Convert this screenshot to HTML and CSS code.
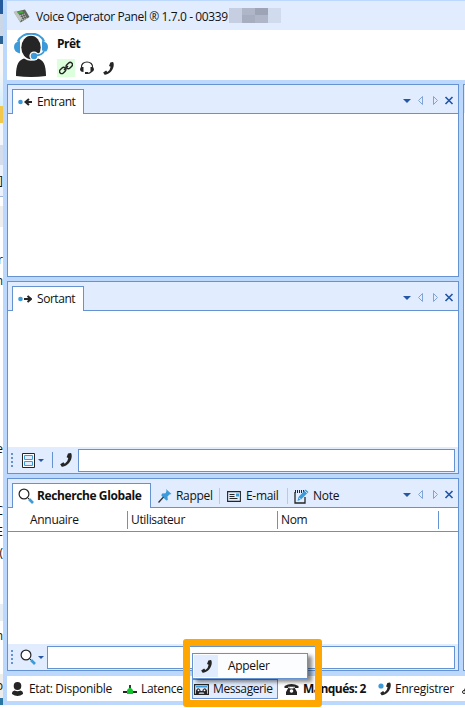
FILE: index.html
```html
<!DOCTYPE html>
<html lang="fr">
<head>
<meta charset="utf-8">
<title>Voice Operator Panel</title>
<link rel="stylesheet" href="styles.css">
</head>
<body>
<svg width="0" height="0" class="defs">
  <symbol id="phone" viewBox="0 0 12 14"><path d="M8 .4 10.6 0Q11.2 0 11.4.7C13 6 8.500 13 2.500 13.800Q1.800 14 1.400 13.300L.2 11.300 3.400 9.300 4.800 10.800Q8 8.500 8.300 5L6.600 4.300Z" fill="#252525"/></symbol>
  <symbol id="search" viewBox="0 0 16 16"><circle cx="6" cy="6" r="4.900" fill="#fff" stroke="#252525" stroke-width="1.200"/><path d="m9.500 9.500 2 2" stroke="#252525"/><path d="m11 11 4 4" stroke="#3d9ad8" stroke-width="2.600"/></symbol>
  <symbol id="controls" viewBox="0 0 52 9"><path d="M1 3h8L5 7z" fill="#2457a6"/><path d="M20.500.5v8l-4-4zM31.500.5v8l4-4z" fill="none" stroke="#80a4d6"/><path d="m43.500 1 7 7m0-7-7 7" stroke="#2457a6" stroke-width="1.700"/></symbol>
</svg>
<div class="desktop">
  <div class="behind">
    <i class="b1"></i><i class="b2"></i><i class="b3"></i><i class="b4"></i><i class="b5"></i><i class="b6"></i><i class="b7"></i><i class="b8"></i><i class="b9"></i><i class="b10"></i><i class="b11"></i>
    <div class="scraps"><span>]</span><span>er</span><span>n</span><span>e</span><span>C</span><span>E</span><span>(</span><span>n</span><span>b</span></div>
  </div>
  <div class="window">
    <header class="title">
      <svg class="desk" width="17" height="14" viewBox="0 0 17 14"><path d="m1 3 11-2.500 4.500 7.500-9 5.500z" fill="#60665f"/><path d="m.5 3 3-1.500 5.500 8.500-2 3z" fill="#bfc3bf"/><path d="m4 3 5-1.500 1.500 2-5 1.500z" fill="#45a83b"/><path d="m7 7 5-2m-4 4 5-2m-4 4 5-2" stroke="#d5d9d5" stroke-dasharray="1.200 .8"/></svg>
      <span class="t-title">Voice Operator Panel ® 1.7.0 - 00339</span>
      <span class="mask"><i></i><i></i><i></i><i></i><i></i><i></i><i></i><i></i></span>
    </header>
    <section class="agent">
      <svg class="avatar" width="34" height="44" viewBox="0 0 34 44"><path d="M2 43C2 31 5 27 10 25.500Q17 30 24 25.500C29 27 32 31 32 43Q17 45 2 43Z" fill="#252525"/><ellipse cx="17" cy="14.500" rx="9.700" ry="11.700" fill="#252525"/><path d="M4 8.500C8-2 26-2 30 8.500" fill="none" stroke="#3d9ad8" stroke-width="2.200"/><path d="M6 8v12.500Q0 19 0 14t6-6M28 8v12.500q6-1.500 6-6.500t-6-6" fill="#3d9ad8"/><path d="M30 18q-1 4-8 4.500" fill="none" stroke="#fff" stroke-width="4"/><circle cx="20" cy="23" r="4.600" fill="#fff"/><circle cx="20" cy="23" r="3.200" fill="#3d9ad8"/><path d="M30 18q-1 4-9 4.500" fill="none" stroke="#3d9ad8" stroke-width="1.800"/></svg>
      <div class="state">
        <b class="t-ready">Prêt</b>
        <div class="tools">
          <span class="link"><svg width="14" height="14" viewBox="0 0 14 14"><g fill="none" stroke="#252525" stroke-width="1.400"><rect x="6.800" y="2.300" width="7" height="4.400" rx="2.200" transform="rotate(-45 10.300 4.500)"/><rect x=".2" y="7.300" width="7" height="4.400" rx="2.200" transform="rotate(-45 3.700 9.500)"/><path d="m5 9 4-4"/></g></svg></span>
          <svg width="14" height="14" viewBox="0 0 14 14"><path d="M1.500 7C0-1 14-1 12.500 7M12 9q0 3-5 3.500" fill="none" stroke="#252525" stroke-width="1.200"/><path d="M1 6h2.500v5Q0 11 0 8zM13 6h-2.500v5Q14 11 14 8zM5 11h3v2H5z" fill="#252525"/></svg>
          <svg class="p" width="11" height="13"><use href="#phone"/></svg>
        </div>
      </div>
    </section>
    <div class="docks">
      <main class="left">
        <section class="panel">
          <div class="tabs"><div class="tab on"><svg width="14" height="8" viewBox="0 0 14 8"><circle cx="2.500" cy="4" r="2.300" fill="#3d9ad8"/><path d="M14 4H8m3-3L7.500 4 11 7" fill="none" stroke="#252525" stroke-width="2"/></svg><span class="t-in">Entrant</span></div><svg class="ctl" width="52" height="9"><use href="#controls"/></svg></div>
          <div class="body"></div>
        </section>
        <section class="panel">
          <div class="tabs"><div class="tab on"><svg width="14" height="8" viewBox="0 0 14 8"><circle cx="2.500" cy="4" r="2.300" fill="#3d9ad8"/><path d="M6 4h6M9.500 1 13 4 9.500 7" fill="none" stroke="#252525" stroke-width="2"/></svg><span class="t-out">Sortant</span></div><svg class="ctl" width="52" height="9"><use href="#controls"/></svg></div>
          <div class="body"></div>
          <div class="bar"><i class="grip"></i><svg class="cab" width="13" height="15" viewBox="0 0 13 15"><path d="M.5.500h12v14H.5z" fill="#fff" stroke="#252525"/><path d="M2.500 2.500h8v4h-8zm0 6h8v4h-8z" fill="#e1edff" stroke="#3d9ad8"/></svg><i class="caret"></i><i class="sep"></i><svg class="dial" width="12" height="14"><use href="#phone"/></svg><div class="input"></div></div>
        </section>
        <section class="panel">
          <div class="tabs">
            <div class="tab on wide"><svg width="16" height="16"><use href="#search"/></svg><b class="t-glob">Recherche Globale</b></div>
            <div class="tab r"><svg width="14" height="14" viewBox="0 0 14 14"><path d="m8 0 5.500 5-2 .5-2 2 .3 3.500-1.500.5-5-5L4 4.500l3.500-.2L8.500 2z" fill="#3d9ad8"/><path d="m5.500 8-5 5.500" stroke="#333" stroke-width="1.300"/></svg><span class="t-rap">Rappel</span></div>
            <div class="tab e"><svg width="14" height="11" viewBox="0 0 14 11"><path d="M.6.600h12.800v9.800H.6zM2.500 3.500h5m-5 2h5m-5 2h8" fill="none" stroke="#252525" stroke-width="1.100"/><path d="M9 2.500h3v3H9z" fill="#3d9ad8"/></svg><span class="t-mail">E-mail</span></div>
            <div class="tab n"><svg width="15" height="15" viewBox="0 0 15 15"><path d="M1 3v11h10V8" fill="none" stroke="#252525" stroke-width="1.300"/><path d="M1 2.500h11" stroke="#252525" stroke-width="3" stroke-dasharray="1 1"/><path d="m3.500 12 1-4 7-7.500 3 2.500-7.500 7.500z" fill="#3d9ad8"/><path d="m5 9 2 1.500M11 2l2 2" stroke="#fff" stroke-width=".7"/></svg><span class="t-note">Note</span></div>
            <svg class="ctl" width="52" height="9"><use href="#controls"/></svg>
          </div>
          <div class="cols"><span class="c1"><span class="t-ann">Annuaire</span></span><span class="c2"><span class="t-util">Utilisateur</span></span><span class="c3"><span class="t-nom">Nom</span></span></div>
          <div class="body"></div>
          <div class="bar"><i class="grip"></i><svg class="find" width="16" height="16"><use href="#search"/></svg><i class="caret"></i><div class="input low"></div></div>
        </section>
      </main>
      <aside class="next"><i></i></aside>
    </div>
    <footer class="status">
      <span class="s1"><svg width="11" height="14" viewBox="0 0 11 14"><ellipse cx="5.500" cy="4" rx="3.800" ry="4" fill="#252525"/><path d="M0 11q0-2 2.500-2.500 3 1.500 6 0Q11 9 11 11v1q-5.500 4-11 0z" fill="#252525"/></svg><span class="t-etat">Etat: Disponible</span></span>
      <span class="s2"><svg width="14" height="9" viewBox="0 0 14 9"><path d="M0 7h4m6 0h4M7 0v3" stroke="#252525" stroke-width="1.800"/><path d="M4 9V5l2-2h2l2 2v4z" fill="#14c42f"/></svg><span class="t-lat">Latence</span></span>
      <span class="s3"><svg width="15" height="11" viewBox="0 0 15 11"><path d="M.6.600h13.800v9.800H.6z" fill="#e1edff" stroke="#252525" stroke-width="1.200"/><path d="M2 2h11v1.500H2z" fill="#3d9ad8"/><path d="M2 10V6.500Q4 2.500 6.500 6v1h2V6Q11 2.500 13 6.500V10h-2.500L9.500 8.500h-4L4.500 10z" fill="#252525"/><circle cx="4.500" cy="6.300" r=".9" fill="#fff"/><circle cx="10.500" cy="6.300" r=".9" fill="#fff"/></svg><span class="t-mess">Messagerie</span></span>
      <span class="s4"><svg width="15" height="11" viewBox="0 0 14 11"><path d="M0 4V2q7-4 14 0v2h-3.500V2.800h-7V4zM4 3.500h1v1h4v-1h1L12.500 8v3h-11V8z" fill="#252525"/><circle cx="7" cy="7" r="1.800" fill="#fff"/></svg><b class="t-manq">Manqués: 2</b></span>
      <span class="s5"><svg width="13" height="14" viewBox="0 0 13 14"><circle cx="3" cy="4" r="2.600" fill="#3d9ad8"/><svg x="2" width="11" height="14"><use href="#phone"/></svg></svg><span class="t-enr">Enregistrer</span></span>
      <svg class="s6" width="4" height="9" viewBox="0 0 4 9"><circle cx="2" cy="7" r="1.500" fill="none" stroke="#252525"/><path d="m2 6 2-4" stroke="#252525"/></svg>
    </footer>
  </div>
  <div class="menu"><span class="mi"><svg width="11" height="13"><use href="#phone"/></svg></span><span class="t-app">Appeler</span></div>
  <div class="highlight"></div>
</div>
</body>
</html>
```
FILE: styles.css
```css
* { box-sizing: border-box; }
body { margin: 0; background: #fff; color: #111; font: 12px/16px "Open Sans", "Noto Sans", sans-serif; overflow: hidden; }
.defs { position: absolute; }
svg { display: block; flex: none; }
span, b { white-space: nowrap; }
.desktop { position: relative; width: 465px; height: 708px; display: flex; }
.behind { position: relative; overflow: hidden; width: 3px; height: 705px; display: flex; flex-direction: column; flex: none; }
.behind i { width: 3px; flex: none; }
.scraps { position: absolute; top: 173px; right: 0; display: grid; justify-items: end; grid-template-rows: 79px 21px 168px 62px 21px 21px 83px 50px 16px; }
.b1 { height: 14px; background: #245b9d; }
.b2 { height: 22px; background: #cbd7e7; }
.b3 { height: 8px; background: #2b6394; }
.b4 { height: 62px; background: linear-gradient(#f7f7f7 45%, #d4efff); }
.b5 { height: 17px; background: #f3c64c; }
.b6 { height: 22px; background: #f3f6fa; }
.b7 { height: 20px; background: #d5dcec; }
.b8 { height: 31px; background: #edf2fc; }
.b9 { height: 408px; background: linear-gradient(#9eb6d3 0 1px, #fff 1px 10px, #eee 10px 31px, #fff 31px); }
.b10 { height: 94px; background: linear-gradient(#e7edf4 0 17px, #fff 17px 70px, #ececec 70px); }
.b11 { height: 7px; background: #2876a3; }
.window { width: 462px; height: 705px; background: #bcd8fd; padding: 1px 0 4px 4px; display: flex; flex-direction: column; flex: none; }
.title { height: 29px; flex: none; background: #e1edff; display: flex; align-items: center; padding-left: 6px; }
.desk { margin-right: 6px; }
.t-title { width: 193px; position: relative; top: 1px; }
.mask { display: grid; grid-template-columns: repeat(4, 13px); grid-template-rows: 7px 8px; }
.mask i { background: #c5cfe1; }
.mask i:nth-child(2), .mask i:nth-child(7) { background: #afb6c8; }
.mask i:nth-child(3) { background: #9da4b5; }
.mask i:nth-child(4), .mask i:nth-child(8) { background: #d0dbed; }
.mask i:nth-child(6) { background: #a6aec0; }
.agent { height: 50px; flex: none; background: #fff; display: flex; padding: 3px 0 0 7px; }
.state { padding: 3px 0 0 9px; }
.state b { display: block; }
.tools { display: flex; align-items: center; margin-top: 7px; height: 18px; }
.link { width: 18px; height: 18px; background: #dcffdc; display: grid; place-items: center; margin-right: 5px; }
.tools .p { margin-left: 9px; }
.docks { height: 592px; flex: none; padding-top: 4px; display: flex; gap: 4px; }
.left { width: 452px; display: flex; flex-direction: column; gap: 4px; }
.panel { height: 193px; flex: none; border: 1px solid #6593d2; background: #fff; display: flex; flex-direction: column; }
.tabs { height: 29px; flex: none; background: #e1edff; border-bottom: 1px solid #6593d2; display: flex; padding: 4px 4px 0 4px; }
.tab { height: 24px; display: flex; align-items: center; gap: 5px; }
.tab.on { width: 72px; height: 25px; background: #fff; border: 1px solid #6593d2; border-bottom: 0; padding-left: 5px; margin-bottom: -1px; }
.tab.wide { width: 139px; gap: 3px; }
.tab.r { width: 69px; padding-left: 7px; gap: 4px; border-right: 1px solid #b4cbed; height: 16px; margin-top: 5px; }
.tab.e { width: 68px; padding-left: 7px; border-right: 1px solid #b4cbed; height: 16px; margin-top: 5px; }
.tab.n { padding-left: 6px; gap: 4px; height: 16px; margin-top: 5px; }
.ctl { margin: 7px 0 0 auto; }
.body { flex: 1; }
.bar { height: 26px; flex: none; background: #e1edff; display: flex; align-items: center; padding: 0 3px; }
.grip { width: 2px; height: 14px; background: repeating-linear-gradient(#6593d2 0 2px, transparent 2px 4px); }
.cab { margin-left: 9px; }
.caret { border: 3px solid transparent; border-top-color: #2457a6; border-bottom: 0; margin-left: 4px; }
.bar .caret { margin-left: 3px; margin-right: 1px; }
.sep { width: 1px; height: 16px; background: #6593d2; margin-left: 7px; }
.dial { margin: 0 6px 0 7px; }
.find { margin-left: 7px; }
.bar .find + .caret { margin-left: 2px; }
.input { flex: 1; height: 23px; border: 1px solid #6593d2; background: #fff; }
.input.low { margin-left: 2px; }
.cols { height: 24px; flex: none; border-bottom: 1px solid #6593d2; display: flex; align-items: center; }
.cols > span { height: 18px; border-right: 1px solid #6593d2; padding: 1px 0 0 3px; }
.cols > .c1 { width: 120px; padding-left: 22px; }
.c2 { width: 150px; }
.c3 { width: 161px; }
.next { width: 2px; height: 587px; border: 1px solid #6593d2; border-right: 0; background: #fff; }
.next i { display: block; height: 28px; background: #e1edff; }
.status { height: 25px; margin-top: 4px; flex: none; background: #fff; display: flex; align-items: center; overflow: hidden; padding-top: 1px; }
.status > span { display: flex; align-items: center; flex: none; }
.s1 { width: 116px; padding-left: 5px; gap: 6px; }
.s2 { width: 69px; gap: 4px; }
.s3 { width: 86px; height: 20px; border: 1px solid #6593d2; background: #e1edff; padding-left: 1px; gap: 4px; }
.s4 { width: 100px; padding-left: 6px; gap: 4px; }
.s5 { width: 84px; gap: 4px; }
.menu { position: absolute; left: 192px; top: 653px; width: 116px; height: 26px; border: 1px solid #6593d2; background: #fcfdff; display: flex; align-items: center; box-shadow: 4px 3px 4px #0007; padding: 1px; }
.mi { width: 24px; height: 22px; background: #e1edff; display: grid; place-items: center; margin-right: 10px; }
.highlight { position: absolute; left: 183px; top: 639px; width: 139px; height: 68px; border: 7px solid #ffa600; border-radius: 3px; }
.t-title { letter-spacing: -.4px; }
.t-rap, .t-mail, .t-note, .t-ann, .t-etat, .t-lat, .t-app { letter-spacing: -.3px; }
.t-util, .t-nom { letter-spacing: -.35px; }
.t-in, .t-out { letter-spacing: -.45px; }
.t-mess { letter-spacing: -.4px; }
.t-enr { letter-spacing: -.25px; }
.t-glob { letter-spacing: -.4px; }
.t-manq, .t-ready { letter-spacing: -.55px; }
```
